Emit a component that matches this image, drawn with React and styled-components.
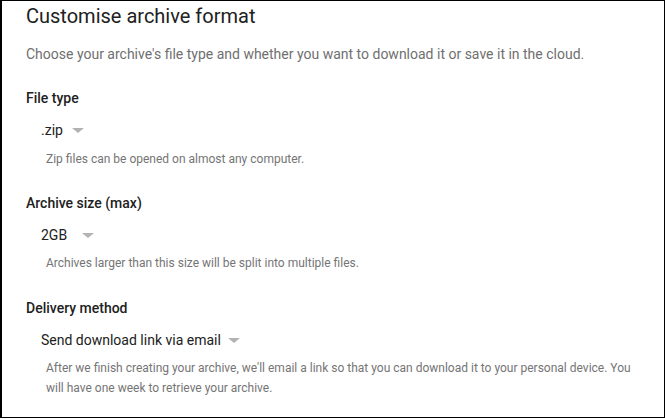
import React from "react";
import styled, { createGlobalStyle } from "styled-components";

const Global = createGlobalStyle`
  html, body { margin: 0; padding: 0; background: #fff; }
  body { font-family: Roboto, "Noto Sans", Arial, sans-serif; -webkit-font-smoothing: antialiased; }
`;

const Frame = styled.div`
  box-sizing: border-box;
  width: 665px;
  height: 418px;
  border-style: solid;
  border-color: #000;
  border-width: 1px 1px 1px 2px;
  padding: 0 24px 0 24px;
  display: flex;
  flex-direction: column;
`;

const Title = styled.h1`
  margin: 0;
  font-size: 20px;
  font-weight: 400;
  line-height: 30px;
  color: #212121;
`;

const Intro = styled.p`
  margin: 13px 0 0;
  font-size: 14px;
  line-height: 20px;
  color: #6f6f6f;
`;

const Section = styled.section`
  margin-top: ${(p) => p.$top}px;
  display: flex;
  flex-direction: column;
`;

const Label = styled.h2`
  margin: 0;
  font-size: 14px;
  font-weight: 500;
  line-height: 20px;
  color: #212121;
`;

const Select = styled.div`
  margin: 12px 0 0 15px;
  display: flex;
  align-items: center;
  gap: ${(p) => p.$gap}px;
  font-size: 14px;
  line-height: 20px;
  color: #212121;
`;

const Caret = styled.span`
  width: 0;
  height: 0;
  border-left: 6px solid transparent;
  border-right: 6px solid transparent;
  border-top: 5px solid #b3b3b3;
  margin-top: 1px;
`;

const Desc = styled.p`
  margin: ${(p) => p.$top}px 0 0 20px;
  font-size: 12px;
  line-height: 20px;
  color: #757575;
`;

const sections = [
  {
    label: "File type",
    value: ".zip",
    gap: 9,
    top: 24,
    descTop: 9,
    desc: "Zip files can be opened on almost any computer.",
  },
  {
    label: "Archive size (max)",
    value: "2GB",
    gap: 15,
    top: 24,
    descTop: 8,
    desc: "Archives larger than this size will be split into multiple files.",
  },
  {
    label: "Delivery method",
    value: "Send download link via email",
    gap: 7,
    top: 25,
    descTop: 8,
    desc: "After we finish creating your archive, we'll email a link so that you can download it to your personal device. You will have one week to retrieve your archive.",
  },
];

export default function App() {
  return (
    <>
      <Global />
      <Frame>
        <Title>Customise archive format</Title>
        <Intro>
          Choose your archive's file type and whether you want to download it or save it in the cloud.
        </Intro>
        {sections.map((s) => (
          <Section key={s.label} $top={s.top}>
            <Label>{s.label}</Label>
            <Select $gap={s.gap}>
              <span>{s.value}</span>
              <Caret />
            </Select>
            <Desc $top={s.descTop}>{s.desc}</Desc>
          </Section>
        ))}
      </Frame>
    </>
  );
}
